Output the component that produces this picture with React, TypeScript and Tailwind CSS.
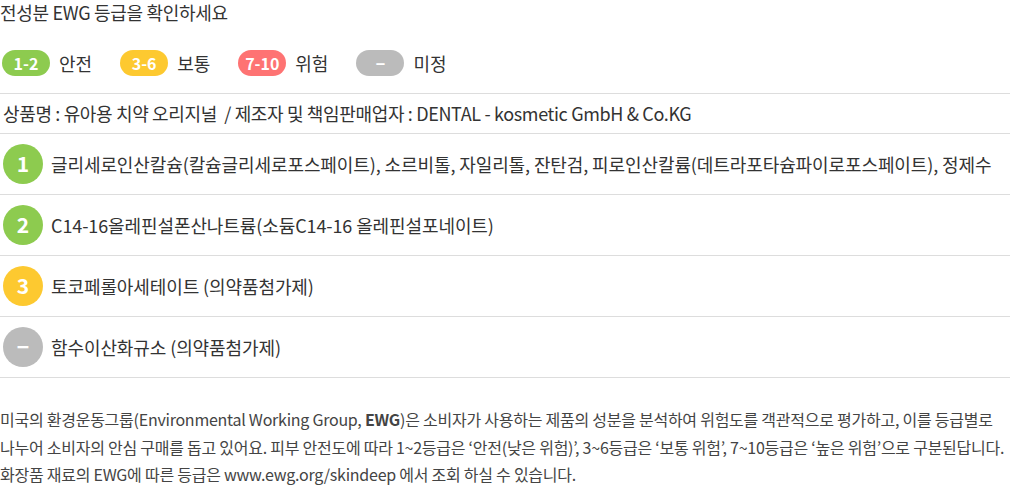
import React from "react";

const legend = [
  { badge: "1-2", label: "안전", color: "bg-[#8dcb4f]" },
  { badge: "3-6", label: "보통", color: "bg-[#fdc930]" },
  { badge: "7-10", label: "위험", color: "bg-[#fe7373]" },
  { badge: "−", label: "미정", color: "bg-[#bbbbbb]" },
];

const rows = [
  {
    n: "1",
    color: "bg-[#8dcb4f]",
    text: "글리세로인산칼슘(칼슘글리세로포스페이트), 소르비톨, 자일리톨, 잔탄검, 피로인산칼륨(데트라포타슘파이로포스페이트), 정제수",
  },
  { n: "2", color: "bg-[#8dcb4f]", text: "C14-16올레핀설폰산나트륨(소듐C14-16 올레핀설포네이트)" },
  { n: "3", color: "bg-[#fdc930]", text: "토코페롤아세테이트 (의약품첨가제)" },
  { n: "−", color: "bg-[#bbbbbb]", text: "함수이산화규소 (의약품첨가제)" },
];

export default function App() {
  return (
    <div
      className="w-[1010px] h-[488px] bg-white text-[#333] overflow-hidden"
      style={{ fontFamily: '"Noto Sans CJK KR", "Noto Sans", sans-serif' }}
    >
      <div className="text-[18px] leading-[24px] tracking-[-0.3px] whitespace-nowrap">전성분 EWG 등급을 확인하세요</div>

      <div className="flex items-center h-[26px] mt-[26px] pl-[2px]">
        {legend.map((l) => (
          <div key={l.label} className="flex items-center mr-[28px]">
            <span
              className={`${l.color} w-[48px] h-[26px] rounded-full text-white font-bold text-[16px] flex items-center justify-center`}
            >
              {l.badge}
            </span>
            <span className="ml-[9px] text-[18px]">{l.label}</span>
          </div>
        ))}
      </div>

      <div className="mt-[17px] border-t border-[#dddddd] h-[40px] flex items-center pl-[3px] text-[18px] tracking-[-0.35px] whitespace-nowrap">
        상품명 : 유아용 치약 오리지널&nbsp; / 제조자 및 책임판매업자 : DENTAL - kosmetic GmbH &amp; Co.KG
      </div>

      {rows.map((r) => (
        <div key={r.text} className="border-t border-[#dddddd] h-[61px] flex items-center pl-[3px]">
          <span
            className={`${r.color} w-[40px] h-[40px] rounded-full text-white font-bold text-[21px] flex items-center justify-center shrink-0`}
          >
            {r.n}
          </span>
          <span className="ml-[8px] text-[18px] tracking-[-0.1px] whitespace-nowrap">{r.text}</span>
        </div>
      ))}
      <div className="border-t border-[#dddddd]" />

      <div className="pt-[28px] text-[16px] leading-[27.5px] text-[#444] tracking-[-0.25px] whitespace-nowrap">
        미국의 환경운동그룹(Environmental Working Group, <b className="font-bold">EWG</b>)은 소비자가 사용하는 제품의 성분을 분석하여 위험도를 객관적으로 평가하고, 이를 등급별로
        <br />
        나누어 소비자의 안심 구매를 돕고 있어요. 피부 안전도에 따라 1~2등급은 ‘안전(낮은 위험)’, 3~6등급은 ‘보통 위험’, 7~10등급은 ‘높은 위험’으로 구분된답니다.
        <br />
        화장품 재료의 EWG에 따른 등급은 www.ewg.org/skindeep 에서 조회 하실 수 있습니다.
      </div>
    </div>
  );
}
